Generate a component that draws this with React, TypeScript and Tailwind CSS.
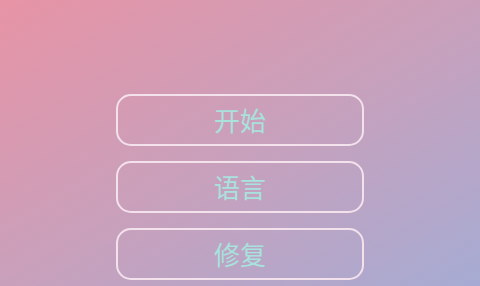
import React from 'react';

const items = ['开始', '语言', '修复'];

const App: React.FC = () => {
  return (
    <div className="w-[480px] h-[286px] overflow-hidden bg-[linear-gradient(to_bottom_right,#e793a5,#c9a0bb_50%,#a6abd3)] flex flex-col items-center pt-[94px] gap-[15px] font-['Noto_Sans_CJK_SC','Noto_Sans',sans-serif]">
      {items.map((label) => (
        <button
          key={label}
          className="w-[248px] h-[52px] shrink-0 rounded-[15px] border-2 border-[#f3e1ec] flex items-center justify-center text-[26px] text-[#a9e1dd] leading-none"
        >
          {label}
        </button>
      ))}
    </div>
  );
};

export default App;
